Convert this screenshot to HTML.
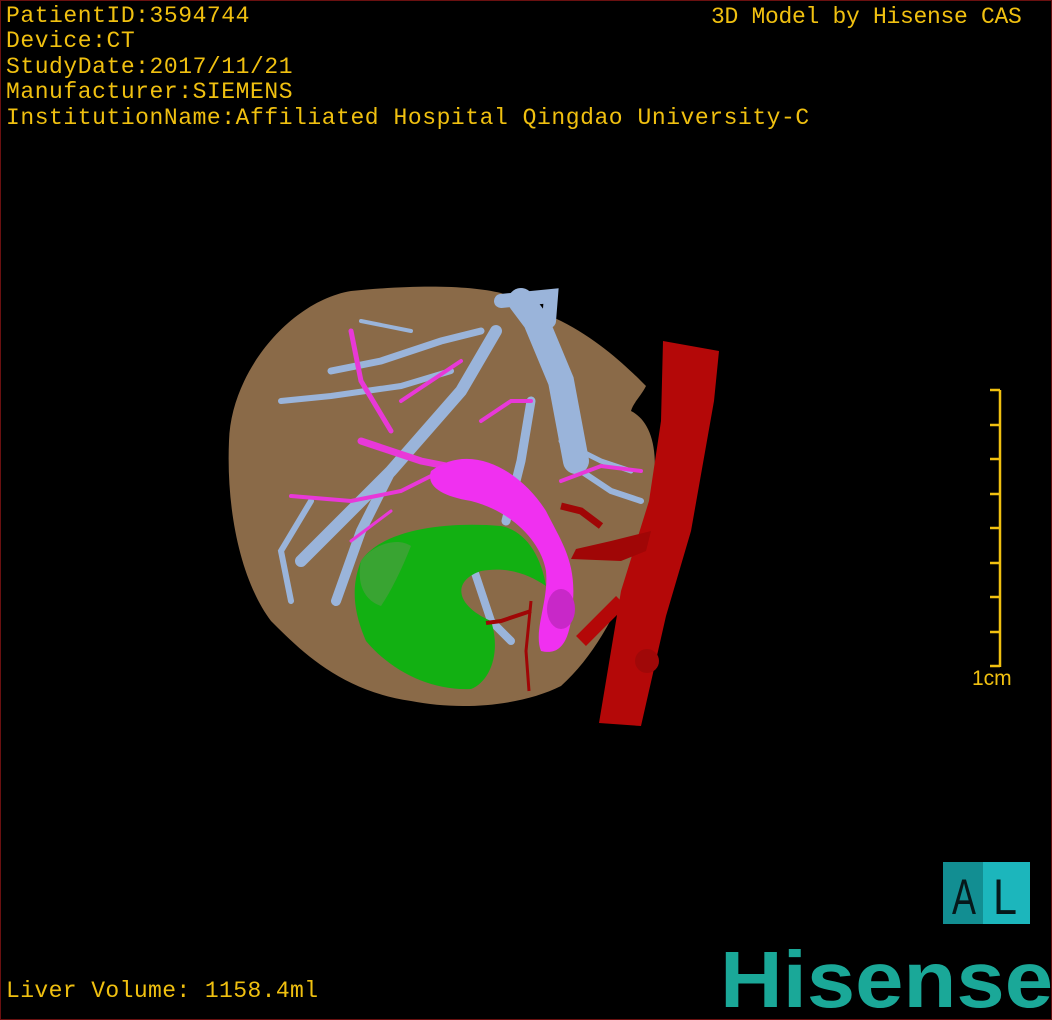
<!DOCTYPE html>
<html><head><meta charset="utf-8"><style>
html,body{margin:0;padding:0;background:#000;}
#w{position:relative;width:1050px;height:1018px;border:1px solid #6a1010;overflow:hidden;background:#000;}
.t{position:absolute;color:#f0c010;font-family:"Liberation Mono","DejaVu Sans Mono",monospace;font-size:23px;line-height:25.4px;white-space:pre;}
svg{position:absolute;left:0;top:0;}
</style></head><body><div id="w">
<div class="t" style="left:5px;top:3px;letter-spacing:0.55px">PatientID:3594744
Device:CT
StudyDate:2017/11/21
Manufacturer:SIEMENS
InstitutionName:Affiliated Hospital Qingdao University-C</div>
<div class="t" style="left:710px;top:4px;letter-spacing:-0.3px">3D Model by Hisense CAS</div>
<div class="t" style="left:5px;top:978px;letter-spacing:0.4px">Liver Volume: 1158.4ml</div>
<div class="t" style="left:971px;top:665px;font-family:'Liberation Sans',sans-serif;font-size:21px">1cm</div>
<svg width="1052" height="1020" viewBox="0 0 1052 1020">
<path d="M228,440 C230,370 290,300 350,290 C420,283 470,285 500,292 L560,320 C600,340 630,370 645,385 C640,395 632,402 630,410 C650,420 660,450 650,500 C640,560 610,640 560,685 C520,705 460,710 410,700 C340,690 300,650 270,620 C240,580 225,510 228,440Z" fill="#8a6a48"/>
<g fill="none" stroke="#9ab4da" stroke-linecap="round">
<path d="M520,300 L535,320 L560,380 L575,460" stroke-width="26"/>
<path d="M500,300 L550,295 L548,320" stroke-width="14"/>
<path d="M495,330 L460,390 L390,470 L340,520 L300,560" stroke-width="12"/>
<path d="M390,470 L360,530 L335,600" stroke-width="10"/>
<path d="M330,370 L380,360 L440,340 L480,330" stroke-width="7"/>
<path d="M280,400 L330,395 L400,385 L450,370" stroke-width="6"/>
<path d="M530,400 L520,460 L505,520" stroke-width="9"/>
<path d="M580,470 L610,490 L640,500" stroke-width="6"/>
<path d="M560,440 L600,460 L630,470" stroke-width="5"/>
<path d="M470,560 L490,620 L510,640" stroke-width="8"/>
<path d="M310,500 L280,550 L290,600" stroke-width="6"/>
<path d="M410,330 L360,320" stroke-width="4"/>
</g>
<g fill="none" stroke="#e838d8" stroke-linecap="round">
<path d="M360,440 L420,460 L470,470 L520,500 L545,530" stroke-width="7"/>
<path d="M350,330 L360,380 L390,430" stroke-width="5"/>
<path d="M290,495 L350,500 L400,490 L440,470" stroke-width="4"/>
<path d="M400,400 L430,380 L460,360" stroke-width="4"/>
<path d="M560,480 L600,465 L640,470" stroke-width="4"/>
<path d="M480,420 L510,400 L530,400" stroke-width="4"/>
<path d="M390,510 L350,540" stroke-width="3"/>
</g>
<path d="M430,470 C470,440 520,470 545,510 C560,540 575,560 572,600 C570,640 560,655 540,650 C532,630 548,600 545,570 C540,540 510,510 470,500 C440,495 425,485 430,470Z" fill="#f030f0"/>
<ellipse cx="560" cy="608" rx="14" ry="20" fill="#c828c8"/>
<path d="M360,560 C380,530 440,520 500,525 C525,530 540,555 545,585 C530,575 510,565 480,570 C450,580 455,605 490,620 C500,650 490,680 470,688 C430,690 390,670 365,640 C352,610 350,585 360,560Z" fill="#12b012"/>
<path d="M360,560 C370,545 395,535 410,545 C400,570 390,590 380,605 C365,600 355,585 360,560Z" fill="#4aa040" opacity="0.7"/>
<path d="M662,340 L718,350 L713,400 L690,530 L665,615 L640,725 L598,722 L610,650 L620,590 L648,500 L660,420Z" fill="#b40808"/>
<path d="M650,530 L610,540 L575,548 L570,558 L620,560 L645,550Z" fill="#a00606"/>
<path d="M600,525 L580,510 L560,505" stroke="#a00606" stroke-width="7" fill="none"/>
<path d="M620,600 C600,620 590,630 580,640" stroke="#b40808" stroke-width="14" fill="none"/>
<circle cx="646" cy="660" r="12" fill="#a00808"/>
<path d="M530,600 L525,650 L528,690" stroke="#a00606" stroke-width="3" fill="none"/>
<path d="M530,610 L500,620 L485,622" stroke="#a00606" stroke-width="4" fill="none"/>
<g stroke="#f0c010" stroke-width="2.5">
<line x1="999" y1="389" x2="999" y2="666"/>
<line x1="989" y1="389" x2="999" y2="389"/><line x1="989" y1="424" x2="999" y2="424"/>
<line x1="989" y1="458" x2="999" y2="458"/><line x1="989" y1="493" x2="999" y2="493"/>
<line x1="989" y1="527" x2="999" y2="527"/><line x1="989" y1="562" x2="999" y2="562"/>
<line x1="989" y1="596" x2="999" y2="596"/><line x1="989" y1="631" x2="999" y2="631"/>
<line x1="989" y1="665" x2="999" y2="665"/>
</g>
<rect x="942" y="861" width="44" height="62" fill="#128e92"/>
<rect x="982" y="861" width="47" height="62" fill="#1cb6bc"/>
<text x="951" y="913" font-family="Liberation Sans Narrow,Liberation Sans,sans-serif" font-size="50" fill="#06181a" textLength="24" lengthAdjust="spacingAndGlyphs">A</text>
<text x="992" y="913" font-family="Liberation Sans Narrow,Liberation Sans,sans-serif" font-size="50" fill="#06181a" textLength="24" lengthAdjust="spacingAndGlyphs">L</text>
<text x="719" y="1006" font-family="Liberation Sans,sans-serif" font-weight="bold" font-size="80" fill="#1aa898" textLength="333" lengthAdjust="spacingAndGlyphs">Hisense</text>
</svg>
</div></body></html>
